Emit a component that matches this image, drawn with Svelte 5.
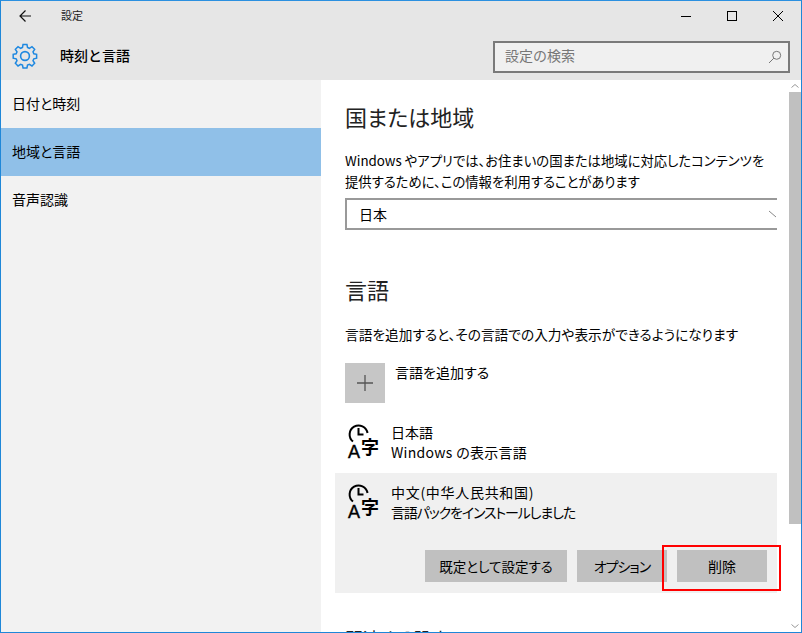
<script>
  const nav = ['日付と時刻', '地域と言語', '音声認識'];
</script>

{#snippet langIcon()}
  <span class="lang-icon">
    <svg width="34" height="36" viewBox="0 0 34 36" fill="none" stroke="#000">
      <path d="M6 18.5A9 9 0 1 1 20.5 10" stroke-width="2"/>
      <path d="M11.5 5v6.5h5" stroke-width="2"/>
    </svg>
    <span class="glyph-a">A</span>
    <span class="glyph-zi">字</span>
  </span>
{/snippet}

<div class="window">
  <header class="head">
    <div class="titlebar">
      <svg class="back" width="16" height="14" viewBox="0 0 16 14" fill="none" stroke="#111" stroke-width="1.2">
        <path d="M13 7H2M7.5 1.5 2 7l5.5 5.5"/>
      </svg>
      <span class="app-title">設定</span>
      <div class="controls">
        <svg width="12" height="12" viewBox="0 0 12 12"><path d="M1 6.5h10" stroke="#000" stroke-width="1"/></svg>
        <svg width="12" height="12" viewBox="0 0 12 12" fill="none"><rect x="1.5" y="1.5" width="9" height="9" stroke="#000"/></svg>
        <svg width="12" height="12" viewBox="0 0 12 12"><path d="M1 1l10 10M11 1 1 11" stroke="#000" stroke-width="1"/></svg>
      </div>
    </div>
    <div class="subbar">
      <svg class="gear" width="26" height="26" viewBox="0 0 26 26" fill="none" stroke="#1e88e0" stroke-width="1.6">
        <circle cx="13" cy="13" r="4.4"/>
        <path d="M10.9 1.8h4.2l.6 3.2 2 .9 2.8-1.8 2.9 2.9-1.8 2.8.9 2 3 .6v4.2l-3 .6-.9 2 1.8 2.8-2.9 2.9-2.8-1.8-2 .9-.6 3h-4.2l-.6-3-2-.9-2.8 1.8-2.9-2.9 1.8-2.8-.9-2-3.2-.6v-4.2l3.2-.6.9-2-1.8-2.8 2.9-2.9 2.8 1.8 2-.9z" transform="translate(13 13) scale(.93) translate(-13 -14.2)"/>
      </svg>
      <h1>時刻と言語</h1>
      <div class="search">
        <span>設定の検索</span>
        <svg width="14" height="14" viewBox="0 0 14 14" fill="none" stroke="#777" stroke-width="1">
          <circle cx="8.7" cy="5.3" r="4"/><path d="M5.8 8.2 1 13"/>
        </svg>
      </div>
    </div>
  </header>

  <div class="body">
    <nav class="side">
      {#each nav as item, i}
        <div class="nav-item" class:active={i === 1}>{item}</div>
      {/each}
    </nav>

    <main class="content">
      <h2 class="first">国または地域</h2>
      <p class="desc">Windows やアプリでは、お住まいの国または地域に対応したコンテンツを<br/>提供するために、この情報を利用することがあります</p>
      <div class="select">
        <span>日本</span>
        <svg class="chev" width="8" height="8" viewBox="0 0 8 8" fill="none" stroke="#888"><path d="M0 1l7 6"/></svg>
      </div>

      <h2 class="second">言語</h2>
      <p class="desc2">言語を追加すると、その言語での入力や表示ができるようになります</p>

      <div class="add">
        <div class="plus">
          <svg width="16" height="16" viewBox="0 0 16 16" stroke="#555" stroke-width="1.3"><path d="M8 0v16M0 8h16"/></svg>
        </div>
        <span>言語を追加する</span>
      </div>

      <div class="lang">
        {@render langIcon()}
        <div class="lang-text"><div>日本語</div><div class="win">Windows の表示言語</div></div>
      </div>

      <div class="lang-panel">
        <div class="lang inner">
          {@render langIcon()}
          <div class="lang-text"><div class="zh">中文(中华人民共和国)</div><div class="pack">言語パックをインストールしました</div></div>
        </div>
        <div class="actions">
          <button class="wide">既定として設定する</button>
          <button class="opt">オプション</button>
          <button class="del">削除</button>
        </div>
      </div>

      <h2 class="third">関連する設定</h2>
    </main>

    <div class="scrollbar">
      <svg class="arrow" width="12" height="12" viewBox="0 0 12 12" fill="none" stroke="#999"><path d="M2.5 7.5 6 4.5l3.5 3"/></svg>
      <div class="thumb"></div>
      <svg class="arrow" width="12" height="12" viewBox="0 0 12 12" fill="none" stroke="#999"><path d="M2.5 4.5 6 7.5l3.5-3"/></svg>
    </div>
  </div>

  <div class="highlight"></div>
</div>

<style>
  :global(body) { margin: 0; }
  .window {
    position: relative;
    box-sizing: border-box;
    width: 802px;
    height: 633px;
    overflow: hidden;
    display: flex;
    flex-direction: column;
    border: 1px solid #1f87d8;
    border-top-color: #2b90e0;
    background: #fff;
    color: #000;
    font-family: "Noto Sans CJK JP", "Noto Sans", sans-serif;
    font-size: 14px;
    font-feature-settings: "palt";
  }
  .head { background: #e6e6e6; height: 79px; flex: none; }
  .titlebar { height: 30px; display: flex; align-items: center; position: relative; }
  .back { margin-left: 17px; }
  .app-title { margin-left: 27px; font-size: 11px; color: #222; position: relative; top: -1px; }
  .controls { position: absolute; right: 0; top: 9px; display: flex; gap: 34px; padding-right: 17px; }
  .controls svg { display: block; }
  .subbar { height: 49px; display: flex; align-items: center; position: relative; }
  .gear { margin-left: 11px; }
  h1 { margin: 0 0 0 22px; font-size: 14px; font-weight: 500; line-height: 20px; position: relative; top: -1px; font-feature-settings: normal; }
  .search {
    position: absolute; left: 492px; top: 10px;
    box-sizing: border-box; width: 297px; height: 32px;
    border: 2px solid #7a7a7a; background: #f0f0f0;
    display: flex; align-items: center; justify-content: space-between;
    padding: 0 6px 5px 10px; color: #777; font-size: 14px; font-feature-settings: normal;
  }
  .search svg { margin-top: 5px; }
  .body { flex: 1; display: flex; min-height: 0; }
  .side { width: 320px; flex: none; background: #f2f2f2; }
  .nav-item { height: 48px; line-height: 47px; padding-left: 11px; font-size: 14px; }
  .nav-item.active { background: #90c0e8; }
  .content { flex: 1; min-width: 0; padding: 0 12px 0 24px; overflow: hidden; }
  h2 { margin: 0; font-size: 22px; font-weight: 400; line-height: 32px; color: #222; }
  h2.first { margin-top: 20px; }
  .desc { margin: 18px 0 0; line-height: 21px; font-size: 13.35px; white-space: nowrap; }
  .select {
    box-sizing: border-box; height: 32px; margin-top: 6px;
    border: 2px solid #999; border-right: none;
    display: flex; align-items: center; justify-content: space-between;
    padding-left: 12px; font-size: 14px;
  }
  .chev { margin-right: 0; }
  h2.second { margin-top: 43px; }
  .desc2 { margin: 19px 0 0; line-height: 21px; font-size: 13.7px; white-space: nowrap; }
  .add { display: flex; margin-top: 18px; height: 40px; }
  .plus { width: 40px; height: 40px; background: #c6c6c6; display: flex; align-items: center; justify-content: center; }
  .add span { margin-left: 10px; line-height: 20px; margin-top: -1px; }
  .lang { display: flex; margin-top: 19px; height: 41px; }
  .lang-icon { position: relative; width: 36px; height: 36px; margin-left: 1px; flex: none; display: block; }
  .lang-icon svg { position: absolute; left: 1px; top: 1px; }
  .glyph-a { position: absolute; left: 2px; top: 21px; font: 400 18px/18px "Liberation Sans", sans-serif; -webkit-text-stroke: 0.4px #000; }
  .glyph-zi { position: absolute; left: 15px; top: 14px; font-size: 18px; line-height: 20px; font-weight: 700; }
  .lang-text { margin-left: 9px; line-height: 20px; font-size: 14px; }
  .zh { letter-spacing: 0.7px; }
  .win { letter-spacing: 0.3px; }
  .pack { letter-spacing: -1.15px; }
  .lang-panel { background: #f0f0f0; height: 120px; margin: 10px 0 0 -10px; }
  .lang.inner { margin-top: 0; padding: 9px 0 0 10px; }
  .actions { display: flex; justify-content: flex-end; gap: 10px; padding: 27px 10px 0 0; }
  button {
    border: none; background: #c0c0c0; height: 32px; padding: 0;
    font: inherit; font-size: 14px; color: #000; font-feature-settings: inherit;
  }
  .wide { width: 142px; font-size: 13.5px; }
  .opt { width: 90px; letter-spacing: -1px; }
  .del { width: 90px; }
  h2.third { margin-top: 29px; font-size: 18px; }
  .scrollbar { width: 12px; flex: none; display: flex; flex-direction: column; background: #fff; }
  .arrow { flex: none; display: block; }
  .thumb { height: 432px; background: #c0c0c0; }
  .scrollbar .arrow:last-child { margin-top: auto; }
  .highlight {
    position: absolute; left: 661px; top: 544px;
    box-sizing: border-box; width: 119px; height: 46px;
    border: 2px solid #f00;
    pointer-events: none;
  }
</style>
